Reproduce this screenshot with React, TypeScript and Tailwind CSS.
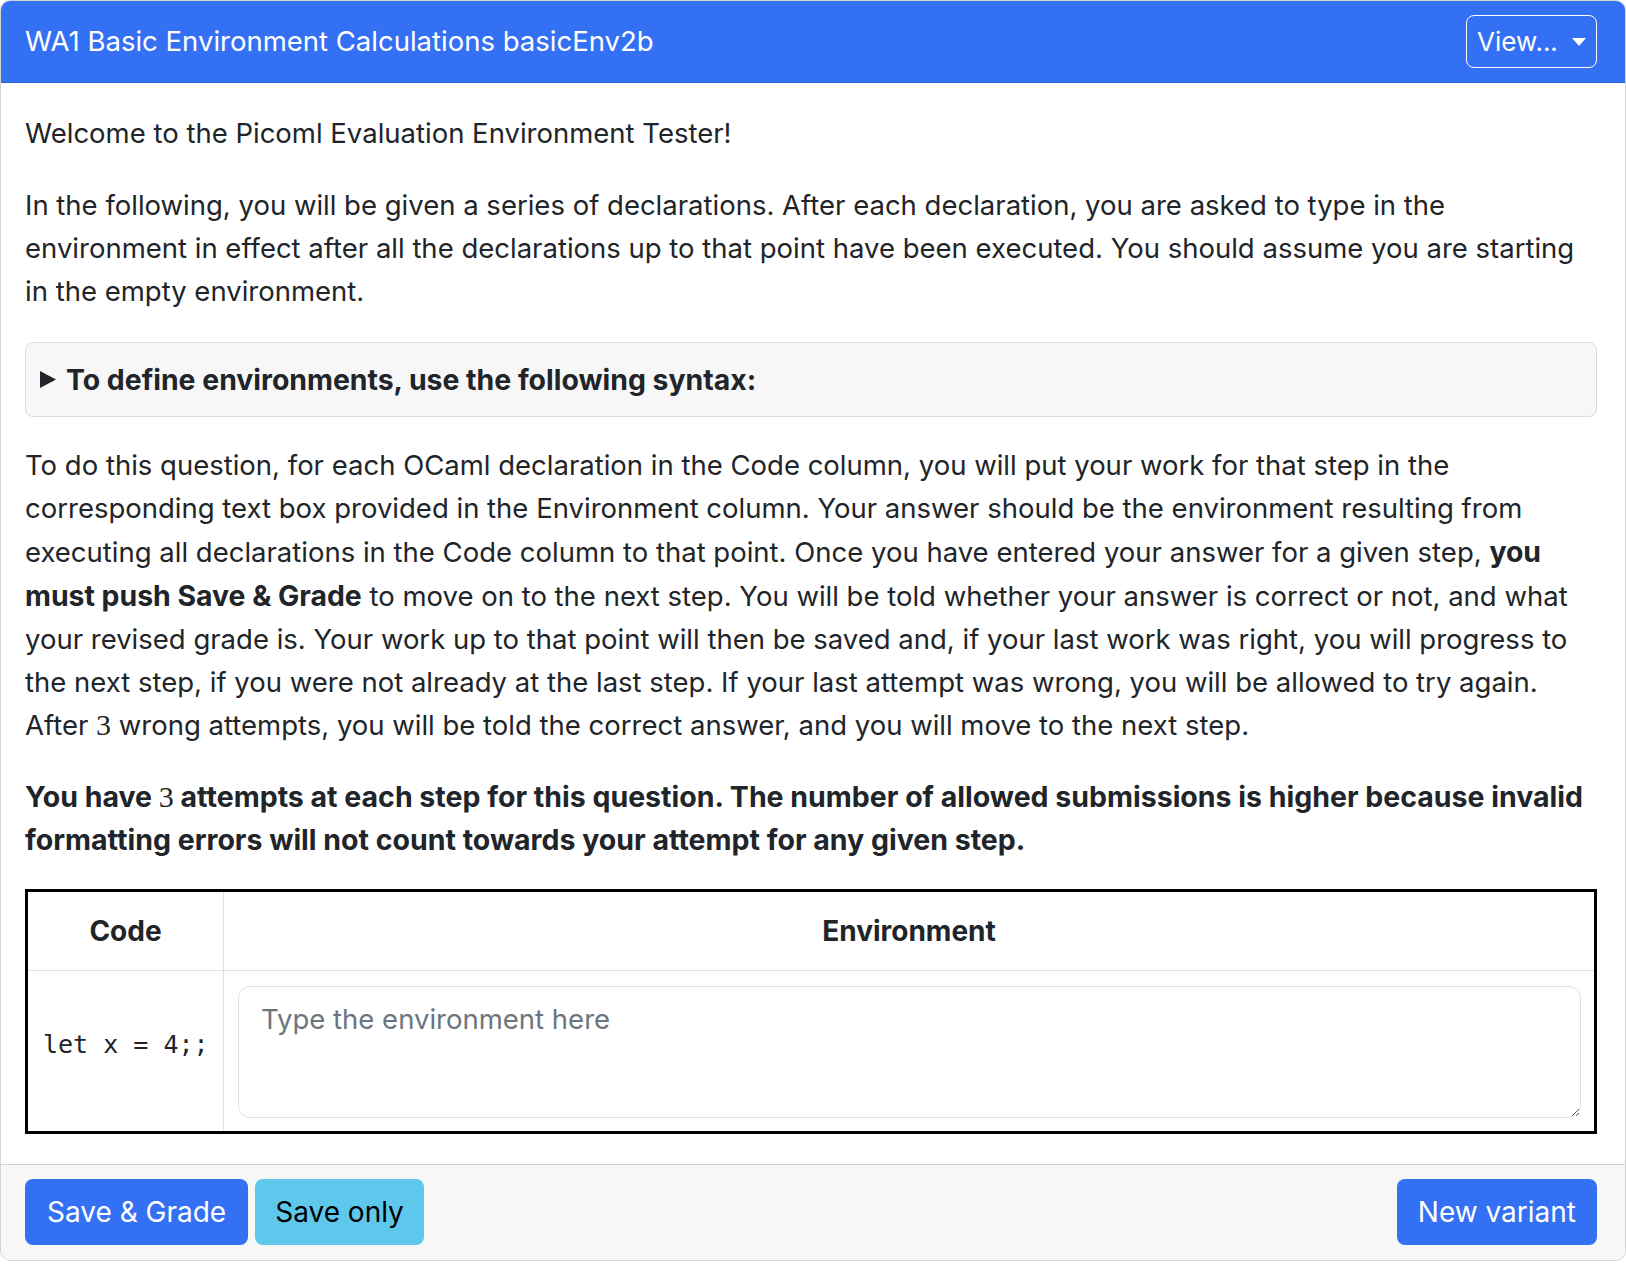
import React from "react";

export default function App() {
  const font = { fontFamily: "Inter, 'Noto Sans', sans-serif" };
  const serif = { fontFamily: "'Liberation Serif', serif" };
  return (
    <div className="w-full bg-white text-[#212529]" style={font}>
      <div className="w-[1626px] border border-[#d4d4d4] rounded-[10px] overflow-hidden">
        {/* Header */}
        <div className="h-[82px] bg-[#3470f4] border-b border-[#2a5fd6] flex items-center justify-between pl-[24px] pr-[28px]">
          <div className="text-white text-[27.5px] leading-none">
            WA1 Basic Environment Calculations basicEnv2b
          </div>
          <button className="h-[53px] w-[131px] border border-white rounded-[8px] flex items-center justify-center gap-[14px] text-white text-[26px]">
            <span>View...</span>
            <svg width="14" height="8" viewBox="0 0 14 8">
              <path d="M0 0 L14 0 L7 8 Z" fill="white" />
            </svg>
          </button>
        </div>

        {/* Body */}
        <div className="pl-[24px] pr-[28px] pt-[29px] text-[27.5px] leading-[43px]">
          <p className="mb-[29px]">Welcome to the Picoml Evaluation Environment Tester!</p>
          <p className="mb-[29px]">
            In the following, you will be given a series of declarations. After each declaration, you are asked to type in the
            environment in effect after all the declarations up to that point have been executed. You should assume you are starting
            in the empty environment.
          </p>
          <div className="mb-[27px] bg-[#f7f7f7] border border-[#dcdcdc] rounded-[8px] px-[14px] py-[15px] flex items-center">
            <svg width="16" height="17" viewBox="0 0 16 17" className="mr-[10px]">
              <path d="M0 0 L16 8.5 L0 17 Z" fill="#212529" />
            </svg>
            <span className="font-bold text-[28.4px]">To define environments, use the following syntax:</span>
          </div>
          <p className="mb-[28px]">
            To do this question, for each OCaml declaration in the Code column, you will put your work for that step in the
            corresponding text box provided in the Environment column. Your answer should be the environment resulting from
            executing all declarations in the Code column to that point. Once you have entered your answer for a given step,{" "}
            <b className="text-[28.4px]">you must push Save &amp; Grade</b> to move on to the next step. You will be told whether your answer is correct or not, and what
            your revised grade is. Your work up to that point will then be saved and, if your last work was right, you will progress to
            the next step, if you were not already at the last step. If your last attempt was wrong, you will be allowed to try again.
            After <span className="text-[30px] leading-none" style={serif}>3</span> wrong attempts, you will be told the correct answer, and you will move to the next step.
          </p>
          <p className="mb-[28px] font-bold text-[28.5px] leading-[43px]">
            You have <span className="font-normal text-[30px] leading-none" style={serif}>3</span> attempts at each step for this question. The number of allowed submissions is higher because invalid
            formatting errors will not count towards your attempt for any given step.
          </p>

          {/* Table */}
          <div className="border-[3px] border-black mb-[30px]">
            <div className="flex border-b border-[#dee2e6] h-[79px]">
              <div className="w-[196px] shrink-0 border-r border-[#dee2e6] flex items-center justify-center font-bold text-[28px]">Code</div>
              <div className="flex-1 flex items-center justify-center font-bold text-[28px]">Environment</div>
            </div>
            <div className="flex h-[160px]">
              <div className="w-[196px] shrink-0 border-r border-[#dee2e6] flex items-center pl-[15px] pb-[14px]">
                <span className="text-[25px]" style={{ fontFamily: "'DejaVu Sans Mono', monospace" }}>let x = 4;;</span>
              </div>
              <div className="flex-1 pl-[14px] pr-[13px] pt-[15px] pb-[13px]">
                <textarea
                  className="w-full h-full border border-[#dee2e6] rounded-[12px] px-[22px] py-[12px] text-[27.5px] leading-[40px] placeholder:text-[#6c757d] outline-none resize-y"
                  style={font}
                  placeholder="Type the environment here"
                />
              </div>
            </div>
          </div>
        </div>

        {/* Footer */}
        <div className="bg-[#f7f7f7] border-t border-[#d4d4d4] pl-[24px] pr-[28px] pt-[14px] pb-[15px] flex items-center justify-between">
          <div className="flex gap-[7px]">
            <button className="h-[66px] px-[22px] rounded-[8px] bg-[#3470f4] text-white text-[28px]">Save &amp; Grade</button>
            <button className="h-[66px] px-[20px] rounded-[8px] bg-[#5ec8ec] text-black text-[28px]">Save only</button>
          </div>
          <button className="h-[66px] px-[21px] rounded-[8px] bg-[#3470f4] text-white text-[28px]">New variant</button>
        </div>
      </div>
    </div>
  );
}
